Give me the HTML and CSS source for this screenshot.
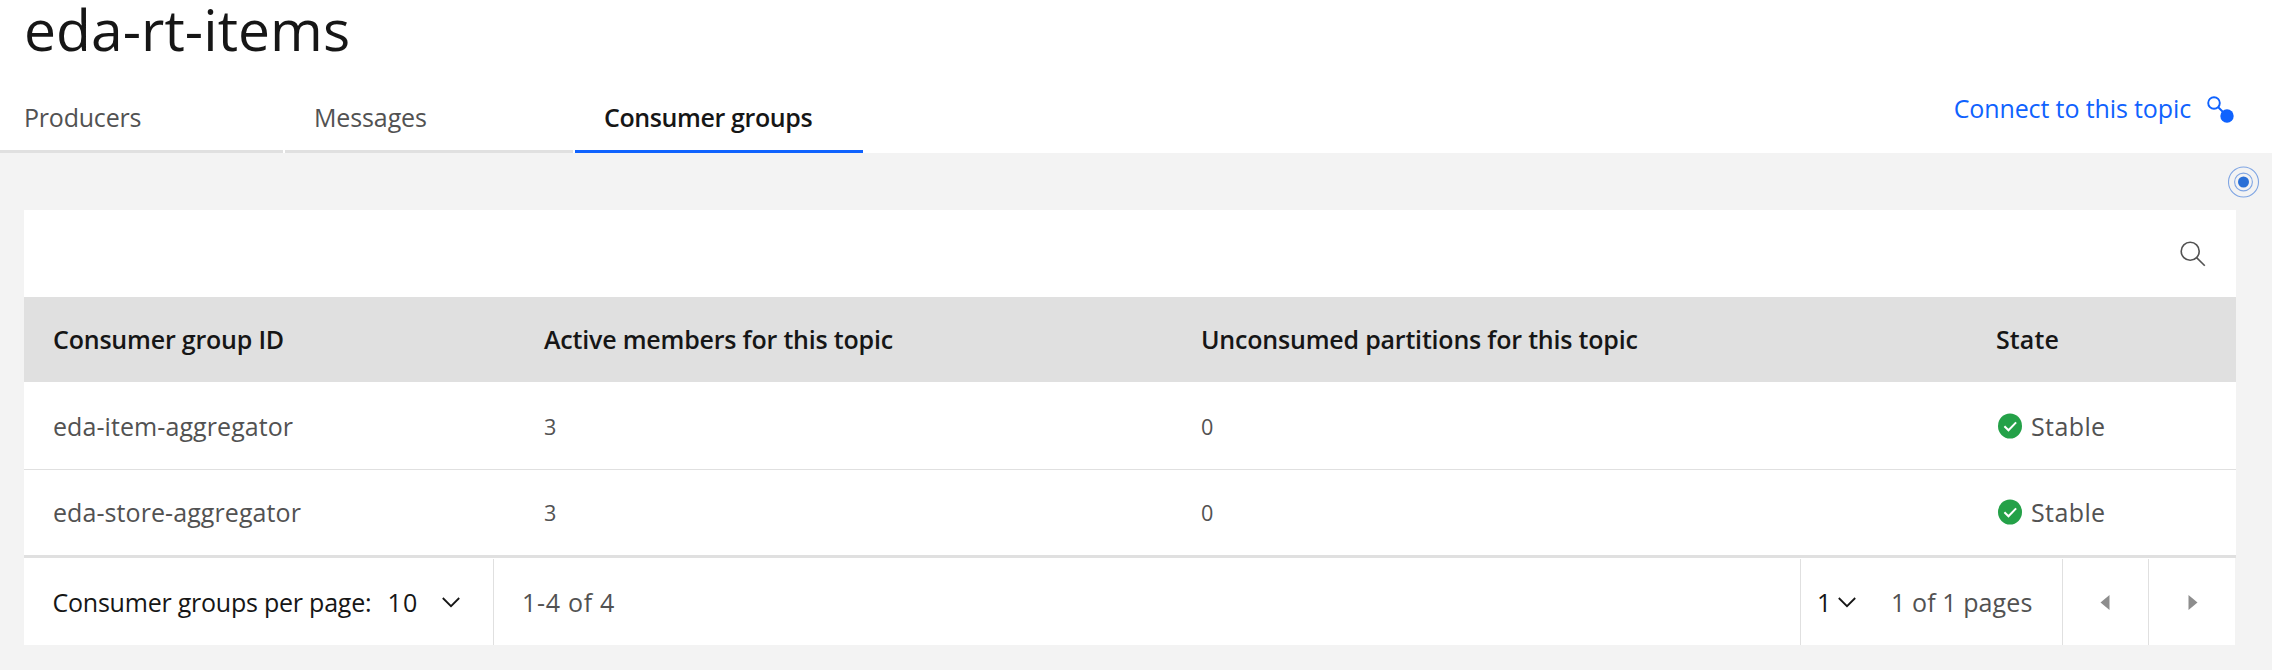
FILE: index.html
```
<!DOCTYPE html>
<html lang="en">
<head>
<meta charset="utf-8">
<title>eda-rt-items</title>
<link rel="stylesheet" href="styles.css">
</head>
<body>
<header class="header">
  <h1 class="title">eda-rt-items</h1>
  <div class="header-row">
    <nav class="tabs">
      <a class="tab tab-producers">Producers</a>
      <a class="tab tab-messages">Messages</a>
      <a class="tab tab-active">Consumer groups</a>
    </nav>
    <a class="connect">
      <span>Connect to this topic</span>
      <svg class="connect-icon" width="28" height="28" viewBox="0 0 28 28"><circle cx="7" cy="7" r="5.8" fill="none" stroke="#0f62fe" stroke-width="1.9"/><path d="M11 11l5 5" stroke="#0f62fe" stroke-width="1.9"/><circle cx="20" cy="20" r="6.7" fill="#0f62fe"/></svg>
    </a>
  </div>
</header>
<main class="main">
  <div class="beacon-row">
    <svg class="beacon" width="32" height="32" viewBox="0 0 32 32"><g fill="none" stroke="#7fa5e3" stroke-width="1.1"><circle cx="15.5" cy="16" r="15"/><circle cx="15.5" cy="16" r="8.9"/></g><circle cx="15.5" cy="16" r="5.5" fill="#2a6fd6"/></svg>
  </div>
  <section class="card">
    <div class="toolbar">
      <svg width="26" height="26" viewBox="0 0 26 26" fill="none" stroke="#525252" stroke-width="1.6"><circle cx="10.2" cy="10.2" r="9"/><path d="M16.6 16.6l8.2 8.2"/></svg>
    </div>
    <div class="row head">
      <div class="head-id">Consumer group ID</div>
      <div class="head-active">Active members for this topic</div>
      <div class="head-unconsumed">Unconsumed partitions for this topic</div>
      <div class="head-state">State</div>
    </div>
    <div class="row item">
      <div class="group-id">eda-item-aggregator</div>
      <div class="num">3</div>
      <div class="num">0</div>
      <div class="state"><svg width="24" height="26" viewBox="0 0 24 26"><ellipse cx="12" cy="13" rx="12" ry="12.6" fill="#24a148"/><path d="M6.4 13.2l4.1 4.1 7.6-7.9" fill="none" stroke="#fff" stroke-width="2"/></svg><span>Stable</span></div>
    </div>
    <div class="row item last">
      <div class="group-id">eda-store-aggregator</div>
      <div class="num">3</div>
      <div class="num">0</div>
      <div class="state"><svg width="24" height="26" viewBox="0 0 24 26"><ellipse cx="12" cy="13" rx="12" ry="12.6" fill="#24a148"/><path d="M6.4 13.2l4.1 4.1 7.6-7.9" fill="none" stroke="#fff" stroke-width="2"/></svg><span>Stable</span></div>
    </div>
  </section>
  <footer class="pagination">
    <div class="page-size">
      <span class="page-size-label">Consumer groups per page:</span>
      <span class="page-size-value">10</span>
      <svg width="18" height="11" viewBox="0 0 18 11"><path d="M.8 1l8.2 8.2L17.2 1" fill="none" stroke="#161616" stroke-width="1.8"/></svg>
    </div>
    <div class="range">1-4 of 4</div>
    <div class="page-pick">
      <span class="page-value">1</span>
      <svg class="page-chevron" width="18" height="11" viewBox="0 0 18 11"><path d="M.8 1l8.2 8.2L17.2 1" fill="none" stroke="#161616" stroke-width="1.8"/></svg>
      <span class="page-count">1 of 1 pages</span>
    </div>
    <div class="arrow arrow-prev"><svg width="10" height="15" viewBox="0 0 10 15"><path d="M9.5 0v15L.5 7.5z" fill="#8d8d8d"/></svg></div>
    <div class="arrow arrow-next"><svg width="10" height="15" viewBox="0 0 10 15"><path d="M.5 0v15l9-7.5z" fill="#8d8d8d"/></svg></div>
  </footer>
</main>
</body>
</html>
```
FILE: styles.css
```
* { box-sizing: border-box; }
body {
  margin: 0;
  height: 670px;
  background: #f3f3f3;
  color: #525252;
  font: 400 25px "Open Sans", "Noto Sans", sans-serif;
  white-space: nowrap;
}
svg { display: block; flex: none; }

.header { height: 153px; background: #fff; }
.title {
  margin: 0;
  padding-left: 24px;
  height: 84px;
  font-size: 57px;
  font-weight: 400;
  line-height: 58px;
  letter-spacing: .05px;
  color: #161616;
}
.header-row { display: flex; justify-content: space-between; height: 69px; }
.tabs { display: flex; gap: 2px; }
.tab {
  width: 288px;
  height: 69px;
  padding-left: 29px;
  line-height: 66px;
  border-bottom: 3px solid #e0e0e0;
}
.tab-producers { width: 283px; padding-left: 24px; letter-spacing: -.21px; }
.tab-messages { letter-spacing: -.12px; }
.tab-active {
  font-weight: 600;
  letter-spacing: -.39px;
  color: #161616;
  border-color: #0f62fe;
}
.connect {
  display: flex;
  align-items: center;
  gap: 16px;
  height: 48px;
  padding-right: 37px;
  letter-spacing: -.12px;
  color: #0f62fe;
}
.connect-icon { margin-top: 3px; }

.main { height: 517px; padding: 0 36px 0 24px; }
.beacon-row { display: flex; justify-content: flex-end; height: 57px; padding-top: 13px; }
.beacon { margin-right: -24px; }

.card { background: #fff; }
.toolbar {
  display: flex;
  align-items: center;
  justify-content: flex-end;
  height: 87px;
  padding-right: 30px;
}
.row {
  display: grid;
  grid-template-columns: 491px 657px 794px 1fr;
  align-items: center;
  padding-left: 29px;
}
.head {
  height: 85px;
  padding-bottom: 2px;
  background: #e0e0e0;
  color: #161616;
  font-weight: 600;
  letter-spacing: -.2px;
}
.head-state { padding-left: 1px; letter-spacing: .1px; }
.item { height: 88px; border-bottom: 1px solid #e0e0e0; }
.last { padding-bottom: 2px; border-bottom-width: 3px; }
.group-id { letter-spacing: .08px; }
.num { padding-top: 2px; font-size: 21.6px; }
.state { display: flex; align-items: center; gap: 9px; padding-left: 3px; letter-spacing: .4px; }

.pagination {
  display: flex;
  height: 87px;
  margin-right: 1px;
  padding-top: 1px;
  background: #fff;
}
.page-size {
  display: flex;
  align-items: center;
  width: 470px;
  padding-left: 28.5px;
  border-right: 1px solid #e0e0e0;
  color: #161616;
}
.page-size-label { width: 335px; letter-spacing: -.23px; }
.page-size-value { width: 54.5px; letter-spacing: 1.2px; }
.range { flex: 1; padding-left: 28px; line-height: 86px; letter-spacing: .7px; }
.page-pick {
  display: flex;
  align-items: center;
  width: 263px;
  padding-left: 16px;
  border: solid #e0e0e0;
  border-width: 0 1px;
}
.page-value { width: 21px; color: #161616; }
.page-count { margin-left: 35px; letter-spacing: .1px; }
.arrow { display: flex; align-items: center; }
.arrow-prev { width: 86px; padding-left: 37px; border-right: 1px solid #e0e0e0; }
.arrow-next { width: 86px; padding-left: 39px; }
```
